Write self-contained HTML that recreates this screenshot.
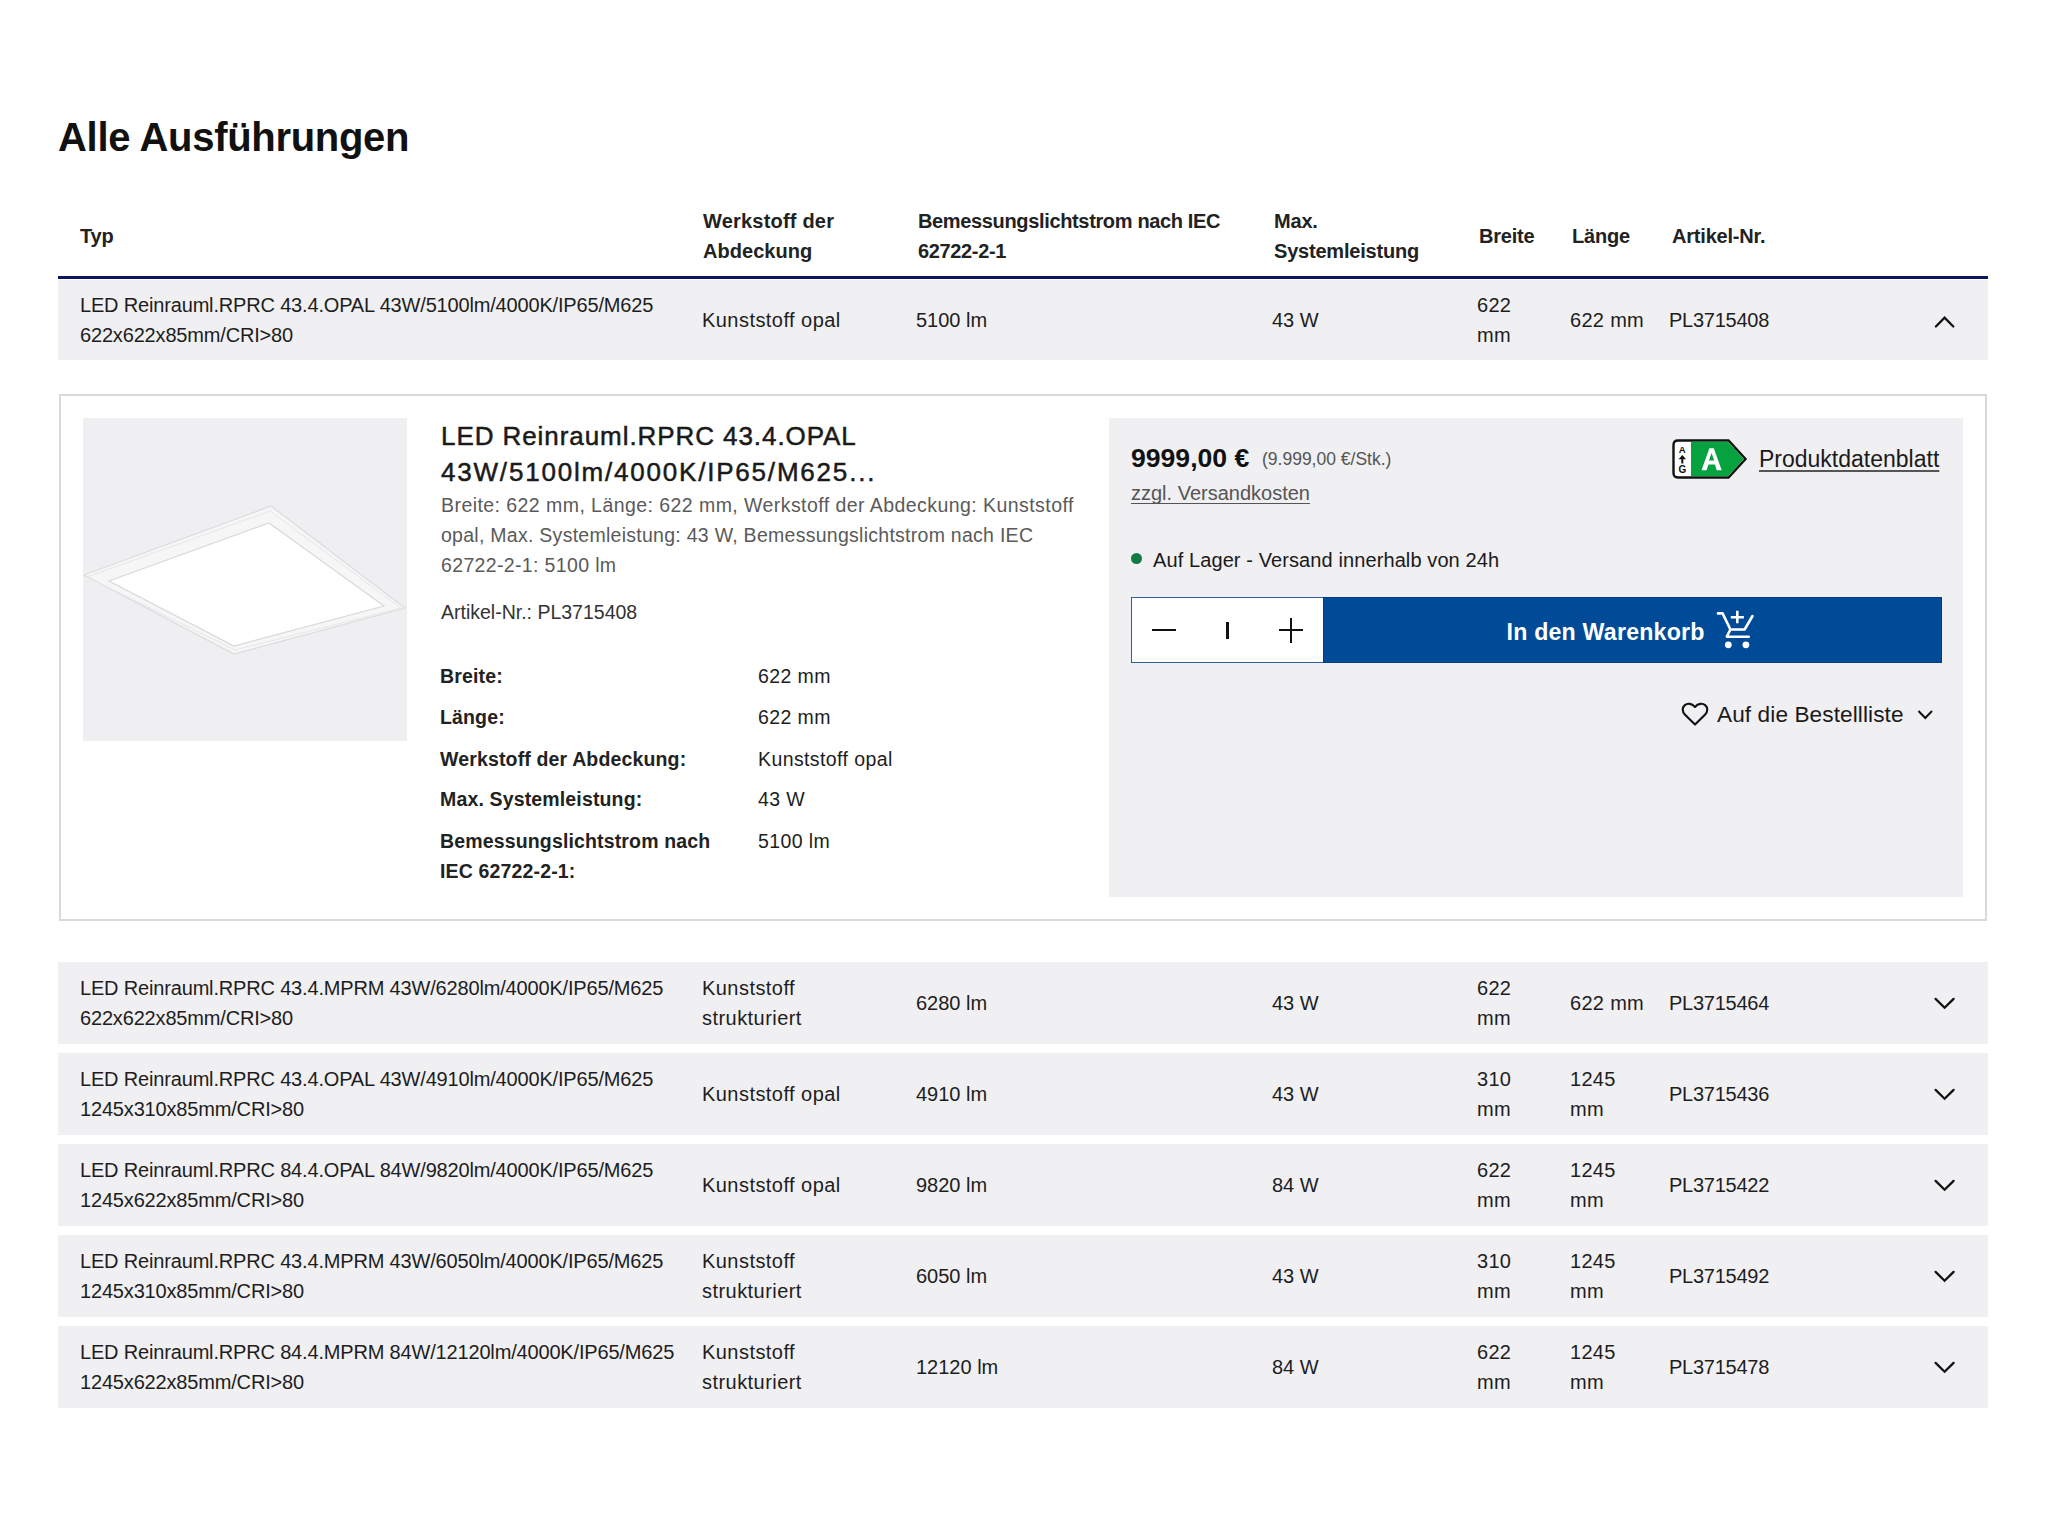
<!DOCTYPE html>
<html lang="de">
<head>
<meta charset="utf-8">
<title>Alle Ausführungen</title>
<style>
*{box-sizing:border-box;margin:0;padding:0}
html,body{width:2048px;height:1535px;overflow:hidden;background:#fff}
body{position:relative;font-family:"Liberation Sans",sans-serif;color:#1d1d1d}
.abs{position:absolute}
h1{position:absolute;left:58px;top:117px;font-size:40px;line-height:40px;font-weight:bold;letter-spacing:-0.3px;color:#111;white-space:nowrap}
.hd{position:absolute;font-size:20px;line-height:30px;font-weight:bold;color:#222;white-space:nowrap;letter-spacing:-0.2px}
.bline{position:absolute;left:58px;top:276px;width:1930px;height:3px;background:#0a195c}
.row{position:absolute;left:58px;width:1930px;background:#f0eff2}
.c{position:absolute;top:0;bottom:0;display:flex;align-items:center;font-size:20px;line-height:30px;color:#1d1d1d;white-space:nowrap}
.c1{left:22px;letter-spacing:-0.17px}
.c2{left:644px;letter-spacing:0.45px}
.c3{left:858px}
.c4{left:1214px}
.c5{left:1419px;letter-spacing:0.3px}
.c6{left:1512px;letter-spacing:0.3px}
.c7{left:1611px;letter-spacing:-0.25px}
.chev{position:absolute;left:1874px;top:50%;margin-top:-12px;width:24px;height:24px}
.spec{font-size:19.5px;line-height:30px;font-weight:bold;color:#222;white-space:nowrap;letter-spacing:0.15px}
.spv{font-size:19.5px;line-height:30px;color:#1d1d1d;white-space:nowrap;letter-spacing:0.4px}
.panel{position:absolute;left:59px;top:394px;width:1928px;height:527px;border:2px solid #d9d9dc;background:#fff}
</style>
</head>
<body>
<h1>Alle Ausführungen</h1>

<!-- header -->
<div class="hd" style="left:80px;top:221px">Typ</div>
<div class="hd" style="left:703px;top:206px;letter-spacing:0.05px"><span style="letter-spacing:0.2px">Werkstoff der</span><br>Abdeckung</div>
<div class="hd" style="left:918px;top:206px;letter-spacing:-0.35px">Bemessungslichtstrom nach IEC<br>62722-2-1</div>
<div class="hd" style="left:1274px;top:206px">Max.<br>Systemleistung</div>
<div class="hd" style="left:1479px;top:221px">Breite</div>
<div class="hd" style="left:1572px;top:221px">Länge</div>
<div class="hd" style="left:1672px;top:221px">Artikel-Nr.</div>
<div class="bline"></div>

<!-- row 1 -->
<div class="row" style="top:280px;height:80px">
  <div class="c c1">LED Reinrauml.RPRC 43.4.OPAL 43W/5100lm/4000K/IP65/M625<br>622x622x85mm/CRI&gt;80</div>
  <div class="c c2">Kunststoff opal</div>
  <div class="c c3">5100 lm</div>
  <div class="c c4">43 W</div>
  <div class="c c5">622<br>mm</div>
  <div class="c c6">622 mm</div>
  <div class="c c7">PL3715408</div>
  <svg class="abs" style="left:1862px;top:17px" width="50" height="50" viewBox="0 0 50 50"><path d="M15.9 29.5 L24.6 20.6 L33.3 29.5" fill="none" stroke="#111" stroke-width="2.3" stroke-linecap="round"/></svg>
</div>

<!-- panel -->
<div class="panel"></div>
<div class="abs" style="left:83px;top:418px;width:324px;height:323px;background:#efeff1">
  <svg width="324" height="323" viewBox="0 0 324 323" style="position:absolute;left:0;top:0">
    <polygon points="1,157 188,88 322,190 151,236" fill="#f6f6f7" stroke="#dcdcdf" stroke-width="1.2"/>
    <polygon points="4,159 187,93 318,190 152,232" fill="none" stroke="#e6e6e8" stroke-width="1"/>
    <polygon points="26,163 186,105 301,188 151,228" fill="#ffffff" stroke="#d9d9dc" stroke-width="1.2"/>
  </svg>
</div>
<div class="abs" style="left:441px;top:418px;font-size:26px;line-height:36px;color:#1a1a1a;white-space:nowrap;letter-spacing:0.93px;-webkit-text-stroke:0.5px #1a1a1a">LED Reinrauml.RPRC 43.4.OPAL<br><span style="letter-spacing:1.8px">43W/5100lm/4000K/IP65/M625...</span></div>
<div class="abs" style="left:441px;top:490px;font-size:19.5px;line-height:30px;color:#5a5a5a;white-space:nowrap;letter-spacing:0.35px"><span style="letter-spacing:0.44px">Breite: 622 mm, Länge: 622 mm, Werkstoff der Abdeckung: Kunststoff</span><br><span style="letter-spacing:0.27px">opal, Max. Systemleistung: 43 W, Bemessungslichtstrom nach IEC</span><br>62722-2-1: 5100 lm</div>
<div class="abs" style="left:441px;top:597px;font-size:19.5px;line-height:30px;color:#333;white-space:nowrap">Artikel-Nr.: PL3715408</div>
<div class="abs spec" style="left:440px;top:661px">Breite:</div>
<div class="abs spv" style="left:758px;top:661px">622 mm</div>
<div class="abs spec" style="left:440px;top:702px">Länge:</div>
<div class="abs spv" style="left:758px;top:702px">622 mm</div>
<div class="abs spec" style="left:440px;top:743.5px">Werkstoff der Abdeckung:</div>
<div class="abs spv" style="left:758px;top:743.5px">Kunststoff opal</div>
<div class="abs spec" style="left:440px;top:784px">Max. Systemleistung:</div>
<div class="abs spv" style="left:758px;top:784px">43 W</div>
<div class="abs spec" style="left:440px;top:826px">Bemessungslichtstrom nach<br>IEC 62722-2-1:</div>
<div class="abs spv" style="left:758px;top:826px">5100 lm</div>

<!-- price box -->
<div class="abs" style="left:1109px;top:418px;width:854px;height:479px;background:#f0eff2"></div>
<div class="abs" style="left:1131px;top:440px;font-size:26.6px;line-height:36px;font-weight:bold;color:#111;white-space:nowrap">9999,00 €</div>
<div class="abs" style="left:1262px;top:444px;font-size:17.5px;line-height:30px;color:#555;white-space:nowrap">(9.999,00 €/Stk.)</div>
<div class="abs" style="left:1131px;top:478px;font-size:20px;line-height:30px;color:#555;white-space:nowrap;text-decoration:underline;text-underline-offset:3px;text-decoration-thickness:1.2px;text-decoration-skip-ink:none">zzgl. Versandkosten</div>
<svg class="abs" style="left:1670px;top:437px" width="80" height="44" viewBox="0 0 80 44">
  <path d="M8 3.5 H58.5 L75.5 22 L58.5 40.5 H8 Q3.5 40.5 3.5 36 V8 Q3.5 3.5 8 3.5 Z" fill="#fff" stroke="#111" stroke-width="2.4"/>
  <path d="M21 4.7 H58 L74 22 L58 39.3 H21 Z" fill="#05a23f"/>
  <path d="M31.5 33.2 L39.4 11.3 H43.8 L51.7 33.2 H46.8 L44.9 27.5 H38.5 L36.5 33.2 Z M38.9 23.6 H44.2 L41.6 16.1 Z" fill="#fff" fill-rule="evenodd"/>
  <text x="12.3" y="15.6" text-anchor="middle" font-family="Liberation Sans" font-weight="bold" font-size="9.6" fill="#111">A</text>
  <path d="M12.3 26.5 V20.5" stroke="#111" stroke-width="2" fill="none"/><path d="M8.6 22.3 L12.3 18 L16 22.3 Z" fill="#111"/>
  <text x="12.3" y="35.8" text-anchor="middle" font-family="Liberation Sans" font-weight="bold" font-size="10" fill="#111">G</text>
</svg>
<div class="abs" style="left:1759px;top:444px;font-size:23px;line-height:30px;color:#1a1a1a;white-space:nowrap;text-decoration:underline;text-underline-offset:2.5px;text-decoration-thickness:1.5px;text-decoration-color:#555;text-decoration-skip-ink:none">Produktdatenblatt</div>
<div class="abs" style="left:1131px;top:553px;width:11px;height:11px;border-radius:50%;background:#127a45"></div>
<div class="abs" style="left:1153px;top:545px;font-size:20px;line-height:30px;color:#1a1a1a;white-space:nowrap;letter-spacing:0.1px">Auf Lager - Versand innerhalb von 24h</div>
<div class="abs" style="left:1131px;top:597px;width:193px;height:66px;border:1.6px solid #2f5e98;background:#fff"></div>
<div class="abs" style="left:1152px;top:629px;width:24px;height:2.2px;background:#111"></div>
<div class="abs" style="left:1226.4px;top:621.5px;width:2.2px;height:17px;background:#111"></div>
<div class="abs" style="left:1279px;top:629px;width:24px;height:2.2px;background:#111"></div>
<div class="abs" style="left:1289.9px;top:618px;width:2.2px;height:24.5px;background:#111"></div>
<div class="abs" style="left:1323px;top:597px;width:619px;height:66px;background:#004b97;border:1px solid #003d86"></div>
<div class="abs" style="left:1506.5px;top:616.5px;font-size:23.2px;line-height:30px;font-weight:bold;color:#fff;white-space:nowrap;letter-spacing:0.2px">In den Warenkorb</div>
<svg class="abs" style="left:1705px;top:600px" width="60" height="55" viewBox="0 0 60 55">
  <path d="M13 13.4 H17.6 L25.4 29.5 L21.8 36.7 H43.8 M25.4 29.5 H39.6 L47.5 16" fill="none" stroke="#fff" stroke-width="2.6" stroke-linecap="round" stroke-linejoin="round"/>
  <path d="M32.3 10.8 V23.3 M25.8 17.2 H38.9" fill="none" stroke="#fff" stroke-width="2.6"/>
  <circle cx="23.3" cy="44.8" r="3.4" fill="#fff"/>
  <circle cx="40.9" cy="44.8" r="3.4" fill="#fff"/>
</svg>
<svg class="abs" style="left:1680px;top:701px" width="30" height="28" viewBox="0 0 30 28">
  <path d="M15 23.6 L4.8 13.4 C2.2 10.8 2.0 6.6 4.6 4.4 C7.4 2.0 11.8 2.2 15 6.0 C18.2 2.2 22.6 2.0 25.4 4.4 C28 6.6 27.8 10.8 25.2 13.4 Z" fill="none" stroke="#111" stroke-width="2.1" stroke-linejoin="round"/>
</svg>
<div class="abs" style="left:1717px;top:700px;font-size:22.6px;line-height:30px;color:#1a1a1a;white-space:nowrap;letter-spacing:0.1px">Auf die Bestellliste</div>
<svg class="abs" style="left:1915px;top:706px" width="20" height="16" viewBox="0 0 20 16">
  <path d="M3.5 5 L10.3 12 L17 5" fill="none" stroke="#111" stroke-width="2"/>
</svg>

<!-- rows 2-6 -->
<div class="row" style="top:962px;height:82px">
  <div class="c c1">LED Reinrauml.RPRC 43.4.MPRM 43W/6280lm/4000K/IP65/M625<br>622x622x85mm/CRI&gt;80</div>
  <div class="c c2">Kunststoff<br>strukturiert</div>
  <div class="c c3">6280 lm</div>
  <div class="c c4">43 W</div>
  <div class="c c5">622<br>mm</div>
  <div class="c c6">622 mm</div>
  <div class="c c7">PL3715464</div>
  <svg class="abs" style="left:1862px;top:16px" width="50" height="50" viewBox="0 0 50 50"><path d="M15.6 20.9 L24.6 29.7 L33.6 20.9" fill="none" stroke="#111" stroke-width="2.3" stroke-linecap="round"/></svg>
</div>
<div class="row" style="top:1053px;height:82px">
  <div class="c c1">LED Reinrauml.RPRC 43.4.OPAL 43W/4910lm/4000K/IP65/M625<br>1245x310x85mm/CRI&gt;80</div>
  <div class="c c2">Kunststoff opal</div>
  <div class="c c3">4910 lm</div>
  <div class="c c4">43 W</div>
  <div class="c c5">310<br>mm</div>
  <div class="c c6">1245<br>mm</div>
  <div class="c c7">PL3715436</div>
  <svg class="abs" style="left:1862px;top:16px" width="50" height="50" viewBox="0 0 50 50"><path d="M15.6 20.9 L24.6 29.7 L33.6 20.9" fill="none" stroke="#111" stroke-width="2.3" stroke-linecap="round"/></svg>
</div>
<div class="row" style="top:1144px;height:82px">
  <div class="c c1">LED Reinrauml.RPRC 84.4.OPAL 84W/9820lm/4000K/IP65/M625<br>1245x622x85mm/CRI&gt;80</div>
  <div class="c c2">Kunststoff opal</div>
  <div class="c c3">9820 lm</div>
  <div class="c c4">84 W</div>
  <div class="c c5">622<br>mm</div>
  <div class="c c6">1245<br>mm</div>
  <div class="c c7">PL3715422</div>
  <svg class="abs" style="left:1862px;top:16px" width="50" height="50" viewBox="0 0 50 50"><path d="M15.6 20.9 L24.6 29.7 L33.6 20.9" fill="none" stroke="#111" stroke-width="2.3" stroke-linecap="round"/></svg>
</div>
<div class="row" style="top:1235px;height:82px">
  <div class="c c1">LED Reinrauml.RPRC 43.4.MPRM 43W/6050lm/4000K/IP65/M625<br>1245x310x85mm/CRI&gt;80</div>
  <div class="c c2">Kunststoff<br>strukturiert</div>
  <div class="c c3">6050 lm</div>
  <div class="c c4">43 W</div>
  <div class="c c5">310<br>mm</div>
  <div class="c c6">1245<br>mm</div>
  <div class="c c7">PL3715492</div>
  <svg class="abs" style="left:1862px;top:16px" width="50" height="50" viewBox="0 0 50 50"><path d="M15.6 20.9 L24.6 29.7 L33.6 20.9" fill="none" stroke="#111" stroke-width="2.3" stroke-linecap="round"/></svg>
</div>
<div class="row" style="top:1326px;height:82px">
  <div class="c c1">LED Reinrauml.RPRC 84.4.MPRM 84W/12120lm/4000K/IP65/M625<br>1245x622x85mm/CRI&gt;80</div>
  <div class="c c2">Kunststoff<br>strukturiert</div>
  <div class="c c3">12120 lm</div>
  <div class="c c4">84 W</div>
  <div class="c c5">622<br>mm</div>
  <div class="c c6">1245<br>mm</div>
  <div class="c c7">PL3715478</div>
  <svg class="abs" style="left:1862px;top:16px" width="50" height="50" viewBox="0 0 50 50"><path d="M15.6 20.9 L24.6 29.7 L33.6 20.9" fill="none" stroke="#111" stroke-width="2.3" stroke-linecap="round"/></svg>
</div>
</body>
</html>
